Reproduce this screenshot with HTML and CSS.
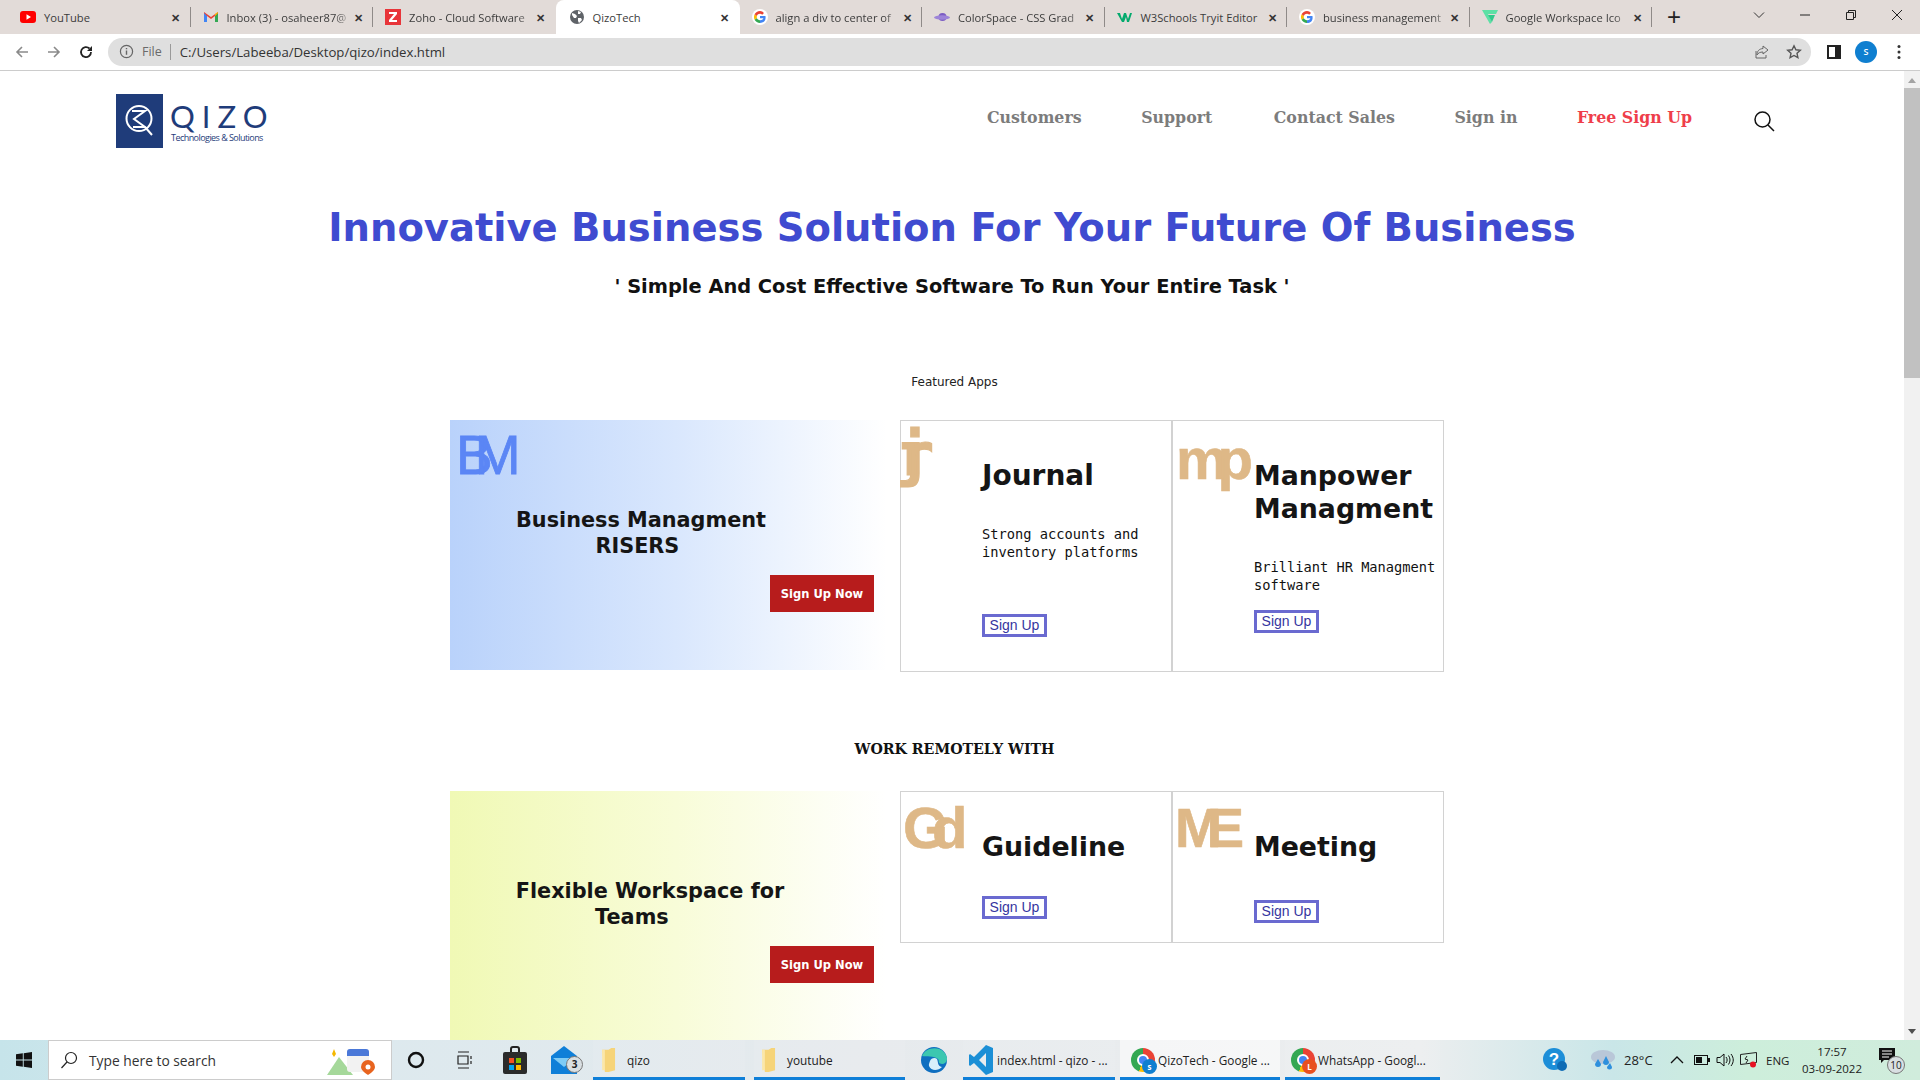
FILE: index.html
```html
<!DOCTYPE html>
<html lang="en">
<head>
<meta charset="utf-8">
<title>QizoTech</title>
<link rel="stylesheet" href="styles.css">
</head>
<body>
<div class="tabstrip">
  <div class="tab"><svg class="fav" viewBox="0 0 16 16"><rect y="2" width="16" height="12" rx="3" fill="#f00"/><path d="M6.500 5.200v5.600L11 8z" fill="#fff"/></svg><span class="tab-t tab-plain">YouTube</span><span class="tab-x">✕</span></div>
  <div class="tab"><svg class="fav" viewBox="0 0 16 16"><path d="M1 3v10h3V7l4 3 4-3v6h3V3l-7 5z" fill="#ea4335"/><path d="M1 13h3V7L1 4z" fill="#4285f4"/><path d="M12 13h3V4l-3 3z" fill="#34a853"/><path d="M15 3l-3 2v2l3-3z" fill="#fbbc04"/></svg><span class="tab-t">Inbox (3) - osaheer87@</span><span class="tab-x">✕</span></div>
  <div class="tab"><svg class="fav" viewBox="0 0 16 16"><rect width="16" height="16" fill="#e8353a"/><path d="M4 3h8v2l-5 6h5v2H4v-2l5-6H4z" fill="#fff"/></svg><span class="tab-t">Zoho - Cloud Software</span><span class="tab-x">✕</span></div>
  <div class="tab tab-active"><svg class="fav" viewBox="0 0 16 16"><circle cx="8" cy="8" r="7" fill="#5f6368"/><path d="M3 4l3 1 2 2-1 2-2 0-2-3zM9 2l3 1-1 2-2 0zM9 9l3 0 1 2-3 3-1-2z" fill="#fff"/></svg><span class="tab-t tab-plain">QizoTech</span><span class="tab-x">✕</span></div>
  <div class="tab"><svg class="fav" viewBox="0 0 16 16"><circle cx="8" cy="8" r="8" fill="#fff"/><path d="M8 7v2.200h3.400c-.4 1.300-1.600 2-3.400 2V14c3.300 0 5.600-2 5.600-5.300 0-.6 0-1.200-.2-1.700z" fill="#4285f4"/><path d="M8 11.200c-1.500 0-2.700-.9-3.100-2.200L2.600 10.800C3.600 12.800 5.600 14 8 14z" fill="#34a853"/><path d="M4.900 9c-.2-.7-.2-1.400 0-2L2.600 5.200c-.8 1.700-.8 3.900 0 5.600z" fill="#fbbc04"/><path d="M8 4.800c.9 0 1.600.3 2.200.9l1.800-1.800C11 2.900 9.600 2 8 2 5.600 2 3.600 3.300 2.600 5.200L4.900 7C5.300 5.700 6.500 4.800 8 4.800z" fill="#ea4335"/></svg><span class="tab-t">align a div to center of</span><span class="tab-x">✕</span></div>
  <div class="tab"><svg class="fav" viewBox="0 0 16 16"><circle cx="8.500" cy="8" r="4" fill="#7c5cc4"/><ellipse cx="8" cy="8.500" rx="8" ry="2.200" fill="#9d84d8"/></svg><span class="tab-t">ColorSpace - CSS Grad</span><span class="tab-x">✕</span></div>
  <div class="tab"><svg class="fav" viewBox="0 0 16 16"><path d="M0 4h3l2 6 2-6h2l2 6 2-6h2l-3 9h-2L9 8l-2 5H5z" fill="#04aa6d"/></svg><span class="tab-t tab-plain">W3Schools Tryit Editor</span><span class="tab-x">✕</span></div>
  <div class="tab"><svg class="fav" viewBox="0 0 16 16"><circle cx="8" cy="8" r="8" fill="#fff"/><path d="M8 7v2.200h3.400c-.4 1.300-1.600 2-3.400 2V14c3.300 0 5.600-2 5.600-5.300 0-.6 0-1.200-.2-1.700z" fill="#4285f4"/><path d="M8 11.200c-1.500 0-2.700-.9-3.100-2.200L2.600 10.800C3.600 12.800 5.600 14 8 14z" fill="#34a853"/><path d="M4.900 9c-.2-.7-.2-1.400 0-2L2.600 5.200c-.8 1.700-.8 3.900 0 5.600z" fill="#fbbc04"/><path d="M8 4.800c.9 0 1.600.3 2.200.9l1.800-1.800C11 2.900 9.600 2 8 2 5.600 2 3.600 3.300 2.600 5.200L4.900 7C5.300 5.700 6.500 4.800 8 4.800z" fill="#ea4335"/></svg><span class="tab-t">business management</span><span class="tab-x">✕</span></div>
  <div class="tab"><svg class="fav" viewBox="0 0 16 16"><path d="M0 1h16l-2 4H6l4 8 -2 2z" fill="#5de0a5"/><path d="M6 6h7l-3 7z" fill="#2fc98a"/></svg><span class="tab-t">Google Workspace Ico</span><span class="tab-x">✕</span></div>
  <span class="newtab">+</span>
  <div class="winctl">
    <svg class="wi" viewBox="0 0 12 12"><path d="M1 3.500l5 5 5-5" fill="none" stroke="#333" stroke-width="1"/></svg>
    <svg class="wi" viewBox="0 0 12 12"><path d="M1 6h10" stroke="#222" stroke-width="1"/></svg>
    <svg class="wi" viewBox="0 0 12 12"><path d="M1.500 3.500h7v7h-7zM3.500 3.500v-2h7v7h-2" fill="none" stroke="#222" stroke-width="1"/></svg>
    <svg class="wi" viewBox="0 0 12 12"><path d="M1 1l10 10M11 1L1 11" stroke="#222" stroke-width="1"/></svg>
  </div>
</div>
<div class="toolbar">
  <svg class="tb-ico ic-back" viewBox="0 0 16 16"><path d="M14 8H3M8 3L3 8l5 5" fill="none" stroke="#8a8a8a" stroke-width="1.600"/></svg>
  <svg class="tb-ico ic-fwd" viewBox="0 0 16 16"><path d="M2 8h11M8 3l5 5-5 5" fill="none" stroke="#8a8a8a" stroke-width="1.600"/></svg>
  <svg class="tb-ico ic-rel" viewBox="0 0 16 16"><path d="M13 8a5 5 0 1 1-1.500-3.500" fill="none" stroke="#222" stroke-width="1.800"/><path d="M14 2v5H9z" fill="#222"/></svg>
  <div class="omnibox">
    <svg class="om-info" viewBox="0 0 16 16"><circle cx="8" cy="8" r="6.500" fill="none" stroke="#666" stroke-width="1.300"/><path d="M8 7v4.500M8 4.300v1.400" stroke="#666" stroke-width="1.500"/></svg>
    <span class="om-file">File</span>
    <span class="om-url">C:/Users/Labeeba/Desktop/qizo/index.html</span>
    <svg class="om-share" viewBox="0 0 16 16"><path d="M9 2l5 4-5 4V8C6 8 4 9 3 11c0-4 2-6 6-6.500zM2 7v7h10v-3" fill="none" stroke="#666" stroke-width="1"/></svg>
    <svg class="om-star" viewBox="0 0 16 16"><path d="M8 1.800l1.900 4 4.400.5-3.300 3 .9 4.400L8 11.500l-3.900 2.200.9-4.400-3.300-3 4.400-.5z" fill="none" stroke="#555" stroke-width="1.400"/></svg>
  </div>
  <svg class="tb-side" viewBox="0 0 14 14"><path d="M0 0h14v14H0z" fill="#222"/><path d="M2 2h6v10H2z" fill="#fff"/></svg>
  <span class="avatar">S</span>
  <svg class="tb-menu" viewBox="0 0 4 16"><circle cx="2" cy="2.500" r="1.500" fill="#333"/><circle cx="2" cy="8" r="1.500" fill="#333"/><circle cx="2" cy="13.500" r="1.500" fill="#333"/></svg>
</div>
<div class="viewport">
  <main class="page">
    <header class="site-head">
      <div class="logo">
        <div class="logo-mark"><svg viewBox="0 0 47 54" width="47" height="54"><circle cx="23" cy="24.500" r="12.500" fill="none" stroke="#fff" stroke-width="2"/><path d="M16 17h13L18 25l11 8H17M29 33l7 8" fill="none" stroke="#fff" stroke-width="2"/></svg></div>
        <div class="logo-text"><div class="logo-name">QIZO</div><div class="logo-sub">Technologies &amp; Solutions</div></div>
      </div>
      <nav class="nav">
        <a class="nav-a">Customers</a><a class="nav-a nav-support">Support</a><a class="nav-a">Contact Sales</a><a class="nav-a">Sign in</a><a class="nav-a nav-free">Free Sign Up</a>
        <svg class="nav-search" viewBox="0 0 22 22"><circle cx="9.500" cy="9.500" r="7.500" fill="none" stroke="#111" stroke-width="1.500"/><path d="M15 15l6 6" stroke="#111" stroke-width="1.500"/></svg>
      </nav>
    </header>
    <h1 class="hero">Innovative Business Solution For Your Future Of Business</h1>
    <h2 class="sub">' Simple And Cost Effective Software To Run Your Entire Task '</h2>
    <p class="featured">Featured Apps</p>
    <section class="row row-a">
      <div class="promo promo-blue">
        <div class="bm-logo">BM</div>
        <h3 class="promo-t">Business Managment<br>RISERS&nbsp;</h3>
        <button class="cta">Sign Up Now</button>
      </div>
      <article class="app">
        <div class="app-logo logo-j">jr</div>
        <div class="app-body">
          <h3 class="app-t app-t-j">Journal</h3>
          <p class="app-d">Strong accounts and inventory platforms</p>
          <button class="su su-j">Sign Up</button>
        </div>
      </article>
      <article class="app">
        <div class="app-logo logo-mp">mp</div>
        <div class="app-body">
          <h3 class="app-t">Manpower Managment</h3>
          <p class="app-d">Brilliant HR Managment software</p>
          <button class="su su-mp">Sign Up</button>
        </div>
      </article>
    </section>
    <p class="work">WORK REMOTELY WITH</p>
    <section class="row row-b">
      <div class="promo promo-yellow">
        <h3 class="promo-t promo-t2">Flexible Workspace for<br>Teams&nbsp;&nbsp;&nbsp;&nbsp;&nbsp;</h3>
        <button class="cta">Sign Up Now</button>
      </div>
      <article class="app app-short">
        <div class="app-logo logo-gd">Gd</div>
        <div class="app-body">
          <h3 class="app-t">Guideline</h3>
          <button class="su su-gd">Sign Up</button>
        </div>
      </article>
      <article class="app app-short">
        <div class="app-logo logo-me">ME</div>
        <div class="app-body">
          <h3 class="app-t">Meeting</h3>
          <button class="su su-me">Sign Up</button>
        </div>
      </article>
    </section>
  </main>
  <div class="scrollbar">
    <span class="sb-up"></span>
    <span class="sb-thumb"></span>
    <span class="sb-fill"></span>
    <span class="sb-down"></span>
  </div>
</div>
<footer class="taskbar">
  <svg class="start" viewBox="0 0 16 16"><path d="M0 2.300l6.800-1v6.300H0zM7.700 1.200L16 0v7.600H7.700zM0 8.400h6.800v6.300l-6.800-1zM7.700 8.400H16V16l-8.300-1.200z" fill="#111"/></svg>
  <div class="searchbox">
    <svg class="sb-mag" viewBox="0 0 18 18"><circle cx="11" cy="7" r="5.500" fill="none" stroke="#222" stroke-width="1.200"/><path d="M7 11l-5.500 6" stroke="#222" stroke-width="1.200"/></svg>
    <span class="sb-text">Type here to search</span>
    <svg class="sb-widget" viewBox="0 0 48 30"><path d="M0 30l12-18 14 18z" fill="#a5d89a"/><path d="M5 9l2-5 2 5-2 3z" fill="#f5b800"/><rect x="20" y="4" width="22" height="23" rx="3" fill="#f2f2f2"/><path d="M20 7a3 3 0 0 1 3-3h16a3 3 0 0 1 3 3v4H20z" fill="#4a78d8"/><path d="M41 15a7 7 0 0 1 7 7c0 4-7 8-7 8s-7-4-7-8a7 7 0 0 1 7-7z" fill="#e8641f"/><circle cx="41" cy="22" r="2.500" fill="#fff"/></svg>
  </div>
  <svg class="tk-cort" viewBox="0 0 18 18"><circle cx="9" cy="9" r="7" fill="none" stroke="#111" stroke-width="2.400"/></svg>
  <svg class="tk-view" viewBox="0 0 18 18"><path d="M3 1h11M3 17h11M3 5h10v8H3zM16 5v3M16 10v3" fill="none" stroke="#222" stroke-width="1.200"/></svg>
  <svg class="tk-store" viewBox="0 0 24 28"><path d="M8 7V3a2 2 0 0 1 2-2h4a2 2 0 0 1 2 2v4" fill="none" stroke="#222" stroke-width="2"/><rect y="6" width="24" height="22" rx="2" fill="#2b2b2b"/><rect x="6" y="12" width="5" height="5" fill="#f25022"/><rect x="13" y="12" width="5" height="5" fill="#7fba00"/><rect x="6" y="19" width="5" height="5" fill="#00a4ef"/><rect x="13" y="19" width="5" height="5" fill="#ffb900"/></svg>
  <div class="tk-mail">
    <svg viewBox="0 0 26 28" width="26" height="28"><path d="M0 10L13 0l13 10v18H0z" fill="#0f7fd8"/><path d="M2 12h22L13 21z" fill="#7ecbf5"/></svg>
    <span class="tk-badge">3</span>
  </div>
  <div class="tk-app tk-qizo">
    <svg class="folder" viewBox="0 0 16 26"><path d="M0 2h7l3-2h4v24l-7 2H3z" fill="#f6d479"/><path d="M0 2h3v22H0z" fill="#fbe7a9"/></svg>
    <span>qizo</span>
  </div>
  <div class="tk-app tk-yt">
    <svg class="folder" viewBox="0 0 16 26"><path d="M0 2h7l3-2h4v24l-7 2H3z" fill="#f6d479"/><path d="M0 2h3v22H0z" fill="#fbe7a9"/></svg>
    <span>youtube</span>
  </div>
  <svg class="tk-edge" viewBox="0 0 26 26"><circle cx="13" cy="13" r="13" fill="#0f6fc0"/><path d="M1 9C5-1 23-2 26 11c.5 5-4 7-7 5.500-2-1-.5-3-2-4.500-4-3.500-12-2-16-3z" fill="#3cc7b0"/><path d="M9 14c1-3 5-4 7-2 1.500 3 0 7 5 8-4 4-11 4-13-1-.5-2 .5-3 1-5z" fill="#d8f0fb"/></svg>
  <div class="tk-app tk-vs">
    <svg class="tk-vsi" viewBox="0 0 24 30"><path d="M17 0l7 3v24l-7 3L5 18l-4 3-1-1v-10l1-1 4 3zm0 8l-7 7 7 7z" fill="#1b8fd6"/></svg>
    <span>index.html - qizo - ...</span>
  </div>
  <div class="tk-app tk-ch tk-active">
    <span class="chrome"><span class="chrome-in"></span><span class="chrome-b chrome-s">s</span></span>
    <span>QizoTech - Google ...</span>
  </div>
  <div class="tk-app tk-wa">
    <span class="chrome"><span class="chrome-in"></span><span class="chrome-b chrome-l">L</span></span>
    <span>WhatsApp - Googl...</span>
  </div>
  <div class="tray">
    <div class="tr-help"><svg viewBox="0 0 24 24" width="24" height="24"><circle cx="11" cy="11" r="11" fill="#1c8ed8"/><text x="11" y="17" class="tr-q">?</text><circle cx="19" cy="18" r="5" fill="#0f6cb5"/></svg></div>
    <svg class="tr-weather" viewBox="0 0 26 24"><ellipse cx="13" cy="9" rx="12" ry="7" fill="#b9c7d8"/><path d="M8 11l3 5a3 3 0 0 1-6 0zM16 8l3 6a3 3 0 0 1-6 0zM20 15l2 4a2.500 2.500 0 0 1-5 0z" fill="#2e90dd"/></svg>
    <span class="tr-temp">28°C</span>
    <svg class="tr-chev" viewBox="0 0 14 8"><path d="M1 7l6-6 6 6" fill="none" stroke="#111" stroke-width="1.300"/></svg>
    <svg class="tr-bat" viewBox="0 0 16 10"><rect x=".5" y=".5" width="13" height="9" fill="none" stroke="#111"/><rect x="2" y="2" width="6" height="6" fill="#111"/><rect x="14" y="3" width="2" height="4" fill="#111"/></svg>
    <svg class="tr-vol" viewBox="0 0 18 14"><path d="M1 4.500h3l4-3.500v12l-4-3.500H1z" fill="none" stroke="#111"/><path d="M10 4c1.500 2 1.500 4 0 6M12.500 2.500c2 3 2 6 0 9M15 1c3 4 3 8 0 12" fill="none" stroke="#111"/></svg>
    <svg class="tr-scr" viewBox="0 0 18 16"><path d="M.5 2.500l16-2v10l-16 2z" fill="none" stroke="#222"/><circle cx="13" cy="12.500" r="3" fill="#e81123"/><path d="M7 4l-2 3 3 1-2 3" fill="none" stroke="#222"/></svg>
    <span class="tr-lang">ENG</span>
    <div class="tr-clock"><span>17:57</span><span>03-09-2022</span></div>
    <div class="tr-note">
      <svg viewBox="0 0 18 16" width="18" height="16"><path d="M0 0h16v12H5l-3 3v-3H0z" fill="#111"/><path d="M3 3h10M3 6h10M3 9h7" stroke="#fff"/></svg>
      <span class="tr-nb">10</span>
    </div>
  </div>
</footer>
</body>
</html>
```
FILE: styles.css
```css
*{box-sizing:border-box}
html,body{margin:0;padding:0;height:100%;overflow:hidden}
body{width:1920px;height:1080px;display:flex;flex-direction:column;font-family:"Open Sans","Noto Sans",sans-serif;background:#fff}

/* browser tabs */
.tabstrip{height:34px;background:#e2dbd8;display:flex;align-items:stretch;padding-left:8px;flex:none}
.tab{width:182.500px;display:flex;align-items:center;padding:0 8px 0 12px;position:relative;font-size:11.200px;color:#3c3c3c;flex:none}
.tab::after{content:"";position:absolute;right:0;top:7px;height:20px;width:1px;background:#8f8a88}
.tab:nth-child(3)::after,.tab-active::after{display:none}
.tab-active{background:#fff;border-radius:8px 8px 0 0;width:184px;padding-left:13px}
.fav{width:16px;height:16px;flex:none;margin-right:8px}
.tab-t{flex:1;min-width:0;white-space:nowrap;-webkit-mask-image:linear-gradient(90deg,#000 88%,rgba(0,0,0,.25));mask-image:linear-gradient(90deg,#000 88%,rgba(0,0,0,.25))}
.tab-plain{-webkit-mask-image:none;mask-image:none}
.tab-x{flex:none;width:14px;text-align:center;font-size:11px;font-weight:700;color:#333;margin-left:2px}
.newtab{font-size:24px;line-height:34px;font-weight:400;color:#222;margin-left:15px;width:22px;font-family:"Liberation Sans",sans-serif}
.winctl{margin-left:auto;display:flex;align-items:flex-start;padding-top:9px;padding-right:17px;gap:34px}
.wi{width:12px;height:12px;display:block}

/* toolbar */
.toolbar{height:37px;flex:none;background:#fff;border-bottom:1px solid #ccc;display:flex;align-items:center;padding-bottom:1px}
.tb-ico{width:16px;height:16px;flex:none}
.ic-back{margin-left:14px}
.ic-fwd{margin-left:16px}
.ic-rel{margin-left:16px}
.omnibox{margin-left:14px;width:1703px;height:28px;border-radius:14px;background:#dfdfdf;display:flex;align-items:center;font-size:12.500px;color:#333;padding-left:11px}
.om-info{width:15px;height:15px;flex:none}
.om-file{margin-left:8px;color:#6a6a6a;padding-right:8px;border-right:1px solid #9a9a9a;line-height:16px}
.om-url{margin-left:9px;color:#333;font-size:13.200px}
.om-share{width:16px;height:16px;margin-left:auto}
.om-star{width:16px;height:16px;margin-left:16px;margin-right:9px}
.tb-side{width:14px;height:14px;margin-left:16px;flex:none}
.avatar{width:22px;height:22px;border-radius:50%;background:#0f7fd0;color:#fff;font-size:9px;font-weight:600;display:flex;align-items:center;justify-content:center;margin-left:14px;flex:none}
.tb-menu{width:4px;height:16px;margin-left:20px;flex:none}

/* page */
.viewport{height:969px;flex:none;display:flex;overflow:hidden}
.page{width:1904px;height:969px;overflow:hidden;flex:none}
.site-head{display:flex;justify-content:space-between;padding:23px 0 0 116px;height:100px}
.logo{display:flex;height:54px}
.logo-mark{width:47px;height:54px;background:#1f3c7a}
.logo-text{margin-left:7px;color:#1f3c7a}
.logo-name{font-family:"Lato","Open Sans",sans-serif;font-weight:400;font-size:31px;line-height:32px;letter-spacing:7px;margin-top:6px}
.logo-sub{font-family:"Open Sans",sans-serif;font-size:9px;line-height:12px;letter-spacing:-.55px;white-space:nowrap;padding-left:1px}
.nav{display:flex;align-items:flex-start;height:40px;padding-right:129px}
.nav-a{font-family:"DejaVu Serif",serif;font-weight:700;font-size:15.800px;line-height:22px;color:#7c7c7c;margin-right:59.500px;margin-top:13px;white-space:nowrap}
.nav-support{margin-right:61.500px}
.nav-free{color:#ef3e4a;margin-right:61px}
.nav-search{width:22px;height:22px;margin-top:16px;flex:none}

.hero{margin:33px 0 0;text-align:center;font-family:"DejaVu Sans",sans-serif;font-weight:700;font-size:38.500px;line-height:48px;color:#3f4bd0}
.sub{margin:23px 0 0;text-align:center;font-family:"DejaVu Sans",sans-serif;font-weight:700;font-size:19.400px;line-height:24px;color:#111}
.featured{margin:75px 0 0;text-align:center;padding-left:5px;font-family:"DejaVu Sans",sans-serif;font-size:12px;line-height:16px;color:#222}
.row{display:flex;margin-left:450px}
.row-a{margin-top:30px}
.row-b{margin-top:33px}
.promo{width:450px;height:250px;display:flex;flex-direction:column;position:relative;flex:none}
.promo-blue{background:linear-gradient(90deg,#b9d2fb,#d9e7fd 50%,#fff 97%)}
.promo-yellow{background:linear-gradient(90deg,#f0f9b5,#f8fcd8 50%,#fff 97%)}
.bm-logo{font-family:"Liberation Sans",sans-serif;font-size:55px;line-height:40px;letter-spacing:-18px;color:#5b86f5;margin:15px 0 0 6px;-webkit-text-stroke:.8px #5b86f5}
.promo-t{margin:33px 0 0 46px;width:290px;text-align:center;font-family:"DejaVu Sans",sans-serif;font-weight:700;font-size:20.800px;line-height:25.500px;color:#151515}
.promo-t2{margin:88px 0 0 55px}
.cta{align-self:flex-end;margin:16px 26px 0 0;width:104px;height:37px;border:0;background:#b71c1c;color:#fff;font-family:"DejaVu Sans Condensed","DejaVu Sans",sans-serif;font-weight:700;font-size:12.800px;padding:0}
.app{width:272px;height:252px;border:1px solid #d2d2d2;display:flex;flex:none}
.app-short{height:152px}
.app-logo{width:81px;flex:none;font-family:"Liberation Sans",sans-serif;font-weight:700;color:#deb887;font-size:58px;line-height:58px;white-space:nowrap;-webkit-text-stroke:.6px #deb887}
.logo-j{font-family:"DejaVu Sans Mono",monospace;letter-spacing:-31px;margin:5px 0 0 -6px;width:87px;-webkit-text-stroke:1.200px #deb887}
.logo-mp{letter-spacing:-10px;padding-left:3px;margin-top:9px}
.logo-gd{letter-spacing:-16px;padding-left:2px;margin-top:7px}
.logo-me{letter-spacing:-15px;padding-left:2px;margin-top:7px;font-size:56px}
.app-body{flex:1;min-width:0;display:flex;flex-direction:column;align-items:flex-start;padding-top:38px}
.app-t{margin:0;font-family:"DejaVu Sans",sans-serif;font-weight:700;font-size:26.800px;line-height:33px;color:#151515}
.app-t-j{font-size:28px}
.app-d{margin:33px 0 0;width:188px;font-family:"DejaVu Sans Mono",monospace;font-size:13.700px;line-height:18px;color:#111}
.su{width:65px;height:23px;border:3px solid #6a6ad0;background:#fff;color:#3535a0;font-family:"Liberation Sans",sans-serif;font-size:14px;padding:0;line-height:17px}
.su-j{margin-top:53px}
.su-mp{margin-top:16px}
.su-gd{margin-top:33px}
.su-me{margin-top:37px}
.work{margin:68px 0 0;text-align:center;padding-left:5px;font-family:"DejaVu Serif",serif;font-weight:700;font-size:14.200px;line-height:18px;color:#111}

/* scrollbar */
.scrollbar{width:16px;flex:none;background:#f1f1f1;display:flex;flex-direction:column;align-items:stretch}
.sb-up{height:17px;position:relative;background:#f1f1f1}
.sb-up::after{content:"";position:absolute;left:4px;top:7px;border:4px solid transparent;border-top:0;border-bottom:5px solid #a3a3a3}
.sb-thumb{height:290px;background:#c1c1c1}
.sb-fill{flex:1}
.sb-down{height:17px;position:relative}
.sb-down::after{content:"";position:absolute;left:4px;top:6px;border:4px solid transparent;border-bottom:0;border-top:5px solid #505050}

/* taskbar */
.taskbar{height:40px;flex:none;background:linear-gradient(90deg,#c6e4ea 0,#dde9ee 20%,#e6eaed 45%,#eceeef 74%,#c9e6e8 84%,#cdeedb 91%,#d0ecdc 100%);display:flex;align-items:center;font-size:12px;color:#222}
.start{width:16px;height:16px;margin-left:16px;flex:none}
.searchbox{margin-left:16px;width:344px;height:40px;background:#fff;border:1px solid #ccc;display:flex;align-items:center;flex:none;padding-left:11px}
.sb-mag{width:18px;height:18px;flex:none}
.sb-text{margin-left:11px;font-size:13.800px;color:#333}
.sb-widget{width:48px;height:30px;margin-left:auto;margin-right:16px;flex:none}
.tk-cort{width:18px;height:18px;margin-left:15px;flex:none}
.tk-view{width:18px;height:18px;margin-left:30px;flex:none}
.tk-store{width:24px;height:28px;margin-left:30px;flex:none}
.tk-mail{margin-left:24px;width:26px;height:28px;position:relative;flex:none}
.tk-mail svg{display:block}
.tk-badge{position:absolute;left:15px;top:10px;width:17px;height:17px;border-radius:50%;background:#d9dfe2;border:1px solid #777;font-size:10px;font-weight:700;line-height:15px;text-align:center;color:#222}
.tk-app{height:40px;display:flex;align-items:center;border-bottom:3px solid #0f7fd8;padding-top:2px;flex:none;font-size:11.800px;color:#222;white-space:nowrap;background:rgba(255,255,255,.08)}
.tk-qizo{margin-left:16px;width:152px;padding-left:9px}
.tk-yt{margin-left:9px;width:151px;padding-left:8px}
.folder{width:15px;height:24px;margin-right:10px;flex:none}
.tk-edge{width:26px;height:26px;margin-left:16px;flex:none}
.tk-vs{margin-left:16px;width:152px;padding-left:6px}
.tk-vsi{width:24px;height:30px;margin-right:4px;flex:none}
.tk-ch{margin-left:5px;width:160px;padding-left:11px}
.tk-active{background:rgba(255,255,255,.55)}
.tk-wa{margin-left:5px;width:155px;padding-left:6px}
.chrome{width:24px;height:24px;border-radius:50%;background:conic-gradient(#ea4335 0 120deg,#fbbc04 120deg 200deg,#34a853 200deg 360deg);position:relative;flex:none;margin-right:3px;display:block}
.chrome-in{position:absolute;left:6px;top:6px;width:12px;height:12px;border-radius:50%;background:#4285f4;border:2px solid #fff}
.chrome-b{position:absolute;left:11px;top:11px;width:15px;height:15px;border-radius:50%;color:#fff;font-size:8px;font-weight:700;text-align:center;line-height:15px}
.chrome-s{background:#0f7fd0}
.chrome-l{background:#e8501f}
.tray{margin-left:auto;display:flex;align-items:center;flex:none;width:386px;height:40px}
.tr-help{width:24px;height:24px;margin-left:9px;flex:none}
.tr-q{font:700 17px "Liberation Sans",sans-serif;fill:#fff;text-anchor:middle}
.tr-weather{width:26px;height:24px;margin-left:23px;flex:none}
.tr-temp{margin-left:8px;font-size:13px;width:29px;flex:none;white-space:nowrap}
.tr-chev{width:14px;height:8px;margin-left:17px;flex:none}
.tr-bat{width:16px;height:10px;margin-left:10px;flex:none}
.tr-vol{width:18px;height:14px;margin-left:6px;flex:none}
.tr-scr{width:18px;height:16px;margin-left:6px;flex:none}
.tr-lang{margin-left:8px;font-size:11.500px;width:24px;flex:none}
.tr-clock{margin-left:9px;width:66px;display:flex;flex-direction:column;align-items:center;font-size:11.500px;line-height:17px;flex:none}
.tr-note{margin-left:14px;width:24px;height:28px;position:relative;flex:none;padding-top:2px}
.tr-note svg{display:block}
.tr-nb{position:absolute;left:8px;top:10px;width:18px;height:18px;border-radius:50%;background:#d9dfe2;border:1px solid #777;font-size:10px;line-height:16px;text-align:center;color:#222}
```
